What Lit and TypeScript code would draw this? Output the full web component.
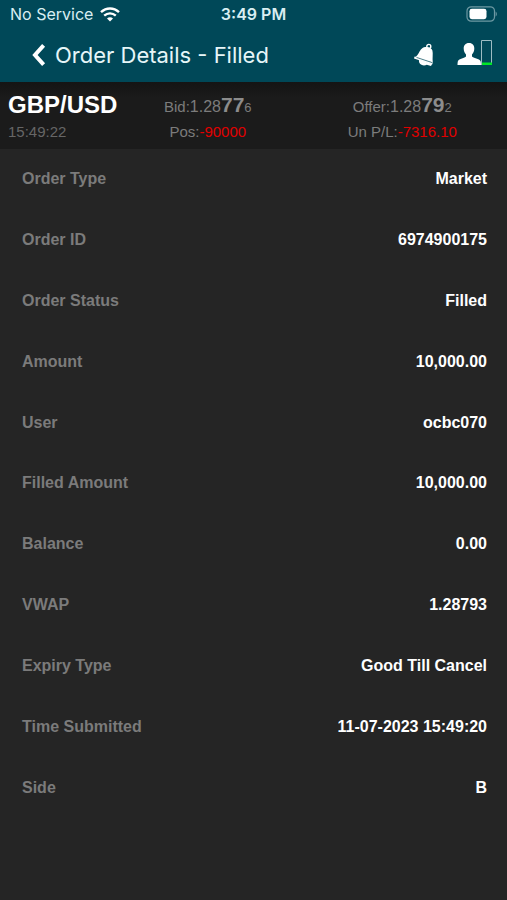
import { LitElement, html, css } from "lit";
import { customElement } from "lit/decorators.js";

const DETAILS: [string, string][] = [
  ["Order Type", "Market"],
  ["Order ID", "6974900175"],
  ["Order Status", "Filled"],
  ["Amount", "10,000.00"],
  ["User", "ocbc070"],
  ["Filled Amount", "10,000.00"],
  ["Balance", "0.00"],
  ["VWAP", "1.28793"],
  ["Expiry Type", "Good Till Cancel"],
  ["Time Submitted", "11-07-2023 15:49:20"],
  ["Side", "B"],
];

@customElement("status-bar")
class StatusBar extends LitElement {
  static styles = css`
    :host {
      display: grid;
      grid-template-columns: 1fr auto 1fr;
      align-items: center;
      height: 28px;
      padding: 0 10px;
      font: 16px/20px Inter, sans-serif;
      color: #d9eef2;
    }
    .carrier {
      display: flex;
      align-items: center;
      gap: 7px;
    }
    .time {
      font-weight: 600;
    }
    .battery {
      justify-self: end;
    }
    svg {
      display: block;
    }
  `;
  render() {
    return html`
      <span class="carrier">
        No Service
        <svg width="20" height="15" viewBox="0 0 20 15" fill="none" stroke="#fff" stroke-width="2.4">
          <path d="M1 5.2C6.2.3 13.8.3 19 5.2" />
          <path d="M4.2 8.7c3.4-3.1 8.2-3.1 11.6 0" />
          <path d="M10 14.6l-3-3.2c1.7-1.5 4.3-1.5 6 0z" fill="#fff" stroke="none" />
        </svg>
      </span>
      <span class="time">3:49 PM</span>
      <svg class="battery" width="31" height="16" viewBox="0 0 31 16">
        <rect x="1" y=".8" width="27.5" height="14.4" rx="4.2" fill="none" stroke="#6d99a3" stroke-width="1.2" />
        <rect x="3.5" y="2.8" width="17" height="10.4" rx="2.4" fill="#fff" />
        <path d="M29.6 5.6c1.6.8 1.6 4 0 4.8z" fill="#6d99a3" />
      </svg>
    `;
  }
}

@customElement("title-bar")
class TitleBar extends LitElement {
  static styles = css`
    :host {
      display: flex;
      align-items: center;
      height: 54px;
      padding: 0 14px 0 31px;
      color: #e6f6f8;
    }
    h1 {
      flex: 1;
      margin: 0 0 0 9px;
      font: 400 22px/28px Inter, sans-serif;
      white-space: nowrap;
    }
    button {
      display: block;
      padding: 0;
      border: 0;
      background: none;
      cursor: pointer;
    }
    .alerts {
      margin-right: 22px;
    }
    svg {
      display: block;
    }
  `;
  render() {
    return html`
      <button aria-label="Back">
        <svg width="15" height="24" viewBox="0 0 15 24" fill="none" stroke="#fff" stroke-width="4">
          <path d="M12.6 2.4L4 12l8.6 9.6" />
        </svg>
      </button>
      <h1>Order Details - Filled</h1>
      <button class="alerts" aria-label="Alerts">
        <svg width="22" height="24" viewBox="0 0 22 24">
          <g fill="#fff">
            <circle cx="15.8" cy="3.4" r="2" fill="none" stroke="#fff" stroke-width="1.4" />
            <path d="M9 5.400C12 3 18.500 4 19.400 7.600c.8 3-.2 7.600.4 12L1.500 14.400C6.500 11.500 5.500 8.200 9 5.400z" />
            <path d="M1.600 13.600L20 19.600l-.9 1.900L1 15.400z" />
            <path d="M6 16.600l13 4.400-1 1.900-4.200-1.200c-2.600 1.600-8.600.8-7.800-5.100z" />
          </g>
          <path d="M3.500 14.400L19.400 19.700" stroke="#004858" stroke-width=".7" />
        </svg>
      </button>
      <button aria-label="Account and connection">
        <svg width="36" height="30" viewBox="0 0 36 30">
          <path
            d="M12 3c3.600 0 5.500 2.500 5.300 5.800-.1 2.700-1 4.300-2.300 5.600v2c1 1.500 7.600 2.100 8.500 4.600.4 1 .5 2.700.5 4H.5c0-1.300.1-3 .5-4 .9-2.500 7-3.100 8-4.600v-2c-1.300-1.300-2.200-2.900-2.300-5.600C6.500 5.500 8.400 3 12 3z"
            fill="#fff"
          />
          <path d="M24.500 25V.5h10V25" fill="none" stroke="#9dbcc3" />
          <rect x="25" y="22.5" width="10" height="2.5" fill="#00e626" />
        </svg>
      </button>
    `;
  }
}

@customElement("quote-bar")
class QuoteBar extends LitElement {
  static styles = css`
    :host {
      display: grid;
      grid-template-columns: 110px 6fr 7fr;
      padding: 9px 0 8px 8px;
      background: linear-gradient(#141414, #1b1b1b 16px);
      color: #7c7c7c;
      font-size: 15px;
      white-space: nowrap;
    }
    .cell {
      display: flex;
      flex-direction: column;
      gap: 4px;
    }
    .quote {
      align-items: center;
    }
    .pair,
    .price {
      height: 28px;
      line-height: 28px;
    }
    .pair {
      font-size: 24px;
      font-weight: 700;
      color: #fff;
    }
    .time {
      color: #666;
    }
    .price {
      line-height: 32px;
    }
    .price span {
      line-height: 20px;
    }
    .price .lead {
      font-size: 16px;
    }
    .price .pips {
      font-size: 21px;
      font-weight: 700;
      color: #8c8c8c;
    }
    .price .tail {
      font-size: 13px;
    }
    .line {
      line-height: 18px;
    }
    .loss {
      color: #e00000;
    }
  `;
  render() {
    return html`
      <div class="cell">
        <span class="pair">GBP/USD</span>
        <span class="line time">15:49:22</span>
      </div>
      <div class="cell quote">
        <span class="price"
          >Bid:<span class="lead">1.28</span><span class="pips">77</span><span class="tail">6</span></span
        >
        <span class="line">Pos:<span class="loss">-90000</span></span>
      </div>
      <div class="cell quote">
        <span class="price"
          >Offer:<span class="lead">1.28</span><span class="pips">79</span><span class="tail">2</span></span
        >
        <span class="line">Un P/L:<span class="loss">-7316.10</span></span>
      </div>
    `;
  }
}

@customElement("app-root")
class AppRoot extends LitElement {
  static styles = css`
    :host {
      display: flex;
      flex-direction: column;
      box-sizing: border-box;
      min-height: 100vh;
      padding-bottom: 82px;
      background: #252525;
      font-family: "Liberation Sans", Arial, sans-serif;
    }
    header {
      background: #004858;
    }
    .details {
      flex: 1;
      display: grid;
      grid-auto-rows: 1fr;
      margin: 0;
      padding: 0 20px 0 22px;
      font-size: 16px;
      font-weight: 700;
      line-height: 20px;
    }
    .row {
      display: flex;
      align-items: center;
      justify-content: space-between;
      min-height: 40px;
    }
    dt {
      color: #7b7b7b;
    }
    dd {
      margin: 0;
      color: #fff;
    }
  `;
  render() {
    return html`
      <header>
        <status-bar></status-bar>
        <title-bar></title-bar>
      </header>
      <quote-bar></quote-bar>
      <dl class="details">
        ${DETAILS.map(
          ([label, value]) => html`<div class="row"><dt>${label}</dt><dd>${value}</dd></div>`
        )}
      </dl>
    `;
  }
}
